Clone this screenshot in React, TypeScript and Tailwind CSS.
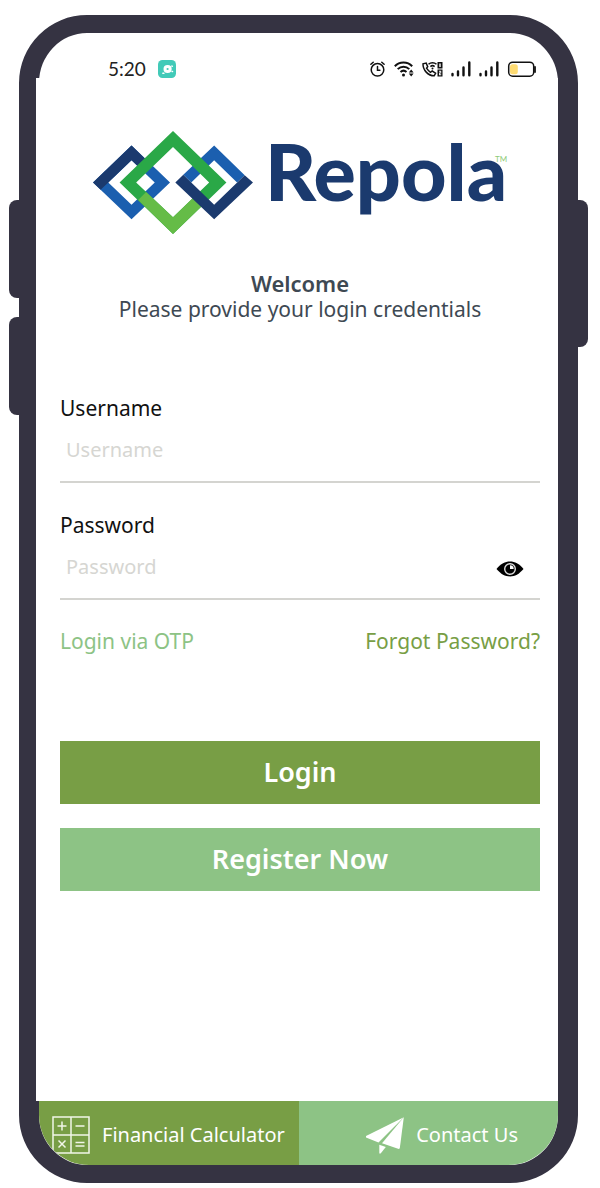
import { useState } from "react";

function LogoMark() {
  return (
    <svg viewBox="44 32 482 310" className="w-[160px] shrink-0" aria-hidden="true">
      {/* left diamond */}
      <path fill="#1b5faf" fillRule="evenodd" d="M44 187 160 76 276 187 160 298ZM90 187 160 254 230 187 160 120Z" />
      <path fill="#1b3a6e" d="M44 187 160 76 206 120 183 142 160 120 90 187 67 209Z" />
      {/* right diamond, upper half */}
      <path fill="#1b5faf" d="M316 164 409 76 501 165 478 187 409 120 340 187Z" />
      {/* center diamond */}
      <path fill="#2aa847" fillRule="evenodd" d="M124 187 285 32 446 187 285 342ZM174 187 285 292 394 187 285 80Z" />
      <path fill="#65bc47" d="M180 240 204 216 285 292 345 234 372 258 285 342Z" />
      {/* right diamond, lower half */}
      <path fill="#1b3a6e" d="M292 187 316 164 409 254 501 165 526 187 409 298Z" />
    </svg>
  );
}

function AlarmIcon() {
  return (
    <svg viewBox="0 0 16 18" className="h-[18px] w-4" fill="none" stroke="#111" strokeWidth="1.5" strokeLinecap="round">
      <circle cx="7.500" cy="9.800" r="6.300" />
      <path d="M7.500 6.500v3.700h2.400M.9 4.200 3.200 2.200M14.100 4.200 11.800 2.200" />
    </svg>
  );
}

function WifiIcon() {
  return (
    <svg viewBox="0 0 20 18" className="h-[18px] w-5" fill="none" stroke="#111" strokeWidth="2">
      <path d="M.8 6.200C5.500 1.200 13.500 1.200 18.200 6.200M3.700 9.100C7 5.800 12 5.800 15.300 9.100M6.500 12C8.500 10.200 10.500 10.200 12.500 12" />
      <circle cx="9.500" cy="15" r="1.500" fill="#111" stroke="none" />
      <path fill="#111" stroke="none" d="M14.800 12.400 17.200 9.600 19.600 12.400ZM14.800 13.600 17.200 16.400 19.600 13.600Z" />
    </svg>
  );
}

function CallIcon() {
  return (
    <svg viewBox="0 0 21 18" className="h-[18px] w-[21px]" fill="none" stroke="#111" strokeWidth="1.500">
      <path d="M1 3.800C.8 10 6 15.800 12.200 15.800L13.600 13.200 10.200 11 8.500 12.300C6.800 11.300 5.500 9.700 4.500 8.200L5.700 6.700 4.200 3.100 1 3.800Z" />
      <path d="M6.500 4.300C8.700 2.200 12.300 2.200 14.500 4.300M8.400 6.600C9.700 5.400 11.300 5.400 12.600 6.600" />
      <circle cx="10.500" cy="8.600" r="1" fill="#111" stroke="none" />
      <path fill="#111" stroke="none" fillRule="evenodd" d="M15.500 2h5v6.500h-5ZM17.300 3.500v3.500h1.400V3.500ZM15.500 9.500h5v7h-5ZM17 10.800v1h1.500v.8H17v2.600h2.200v-1h-1.400v-.8h1.400v-2.600Z" />
    </svg>
  );
}

function SignalIcon() {
  return (
    <svg viewBox="0 0 20 18" className="h-[18px] w-5" stroke="#111" strokeWidth="2.400" strokeLinecap="round">
      <path d="M1.500 14V15.200M7 11.500V15.200M12.500 7.500V15.200M18.300 2.500V15.200" />
    </svg>
  );
}

function BatteryIcon() {
  return (
    <svg viewBox="0 0 30 18" className="h-[18px] w-[30px]">
      <rect x="1.700" y="2.200" width="25" height="14" rx="4" fill="none" stroke="#111" strokeWidth="1.500" />
      <rect x="3" y="4.200" width="7.800" height="10" rx="2.500" fill="#ffdc73" />
      <path d="M28 7v5" stroke="#111" strokeWidth="1.800" strokeLinecap="round" />
    </svg>
  );
}

function EyeIcon() {
  return (
    <svg viewBox="0 0 28 16" className="h-4 w-7">
      <path d="M.5 8C5 2.800 9 .6 14 .6S23 2.800 27.500 8C23 13.200 19 15.400 14 15.400S5 13.200.5 8Z" />
      <circle cx="14" cy="8" r="5.300" fill="none" stroke="#ddd" strokeWidth="1.400" />
      <path fill="#fff" d="M14 8V4.300A3.700 3.700 0 0 1 17.700 8Z" />
    </svg>
  );
}

function CalculatorIcon() {
  return (
    <svg viewBox="0 0 38 38" className="size-[38px] shrink-0" fill="none" stroke="#f1f6e8" strokeWidth="1.500">
      <path d="M1 1h36v36H1ZM19 1v36M1 19h36M5.500 10h9M10 5.500v9M23.500 10h9M6.500 24.500l7 7M13.500 24.500l-7 7M23.500 26.500h9M23.500 30h9" />
    </svg>
  );
}

function PlaneIcon() {
  return (
    <svg viewBox="0 0 38 37" className="h-[37px] w-[38px] shrink-0" fill="#fff">
      <path d="M37.800.3 0 19V20.400L12.500 25.500Z" />
      <path d="M37.800.3 16 26.300 32.800 32 33.800 31.300Z" />
      <path d="M13.300 27.800 19.800 30 14.600 36.500H13.300Z" />
    </svg>
  );
}

export default function App() {
  const [username, setUsername] = useState("");
  const [password, setPassword] = useState("");
  const [showPassword, setShowPassword] = useState(false);

  return (
    <div className="flex min-h-screen flex-col bg-white pt-[15px] pr-[22px] pb-[5px] pl-[19px] font-['Noto_Sans',sans-serif]">
      {/* Phone frame */}
      <div className="relative flex flex-1 flex-col rounded-[68px] border-x-[20px] border-y-[18px] border-[#353342]">
        {/* Hardware buttons */}
        <div className="absolute top-[167px] -left-[30px] h-[98px] w-[12px] rounded-l-lg bg-[#353342]" />
        <div className="absolute top-[284px] -left-[30px] h-[98px] w-[12px] rounded-l-lg bg-[#353342]" />
        <div className="absolute top-[167px] -right-[30px] h-[147px] w-[12px] rounded-r-lg bg-[#353342]" />

        <header className="flex h-[45px] items-end pr-[21px] pl-[69px]">
          <span className="font-[Lato,sans-serif] text-[19px] leading-[18px] text-[#222]">5:20</span>
          <svg viewBox="0 0 18 18" className="ml-3 size-[18px]">
            <rect width="18" height="18" rx="4.500" fill="#42cab8" />
            <circle cx="9.600" cy="9" r="2.600" fill="none" stroke="#fff" strokeWidth="3" />
            <path d="M4.800 13.200h1.200M13.800 6l.6.300M14 11.500h.6" stroke="#fff" strokeWidth="1.400" strokeLinecap="round" />
          </svg>
          <div className="ml-auto flex items-center gap-2">
            <AlarmIcon />
            <WifiIcon />
            <CallIcon />
            <SignalIcon />
            <SignalIcon />
            <BatteryIcon />
          </div>
        </header>

        <main className="-ml-[3px] flex-1 bg-white pr-[18px] pl-6">
          <div className="flex items-start justify-center gap-3 pt-[53px]">
            <LogoMark />
            <h1 className="relative font-[Lato,sans-serif] text-[79px] leading-[80px] font-black text-[#1b3a6e]">
              Repola
              <span className="absolute top-6 right-0 text-[8px] leading-none font-normal text-[#8fcb78]">TM</span>
            </h1>
          </div>

          <div className="mt-9 text-center text-[#3e4953]">
            <h2 className="text-[22px] leading-[26px] font-semibold">Welcome</h2>
            <p className="text-[21px] leading-[26px]">Please provide your login credentials</p>
          </div>

          <form className="mt-[71px]" onSubmit={(e) => e.preventDefault()}>
            <div className="border-b-2 border-[#d4d4d0]">
              <label htmlFor="username" className="block text-[21px] leading-[30px] text-[#111]">
                Username
              </label>
              <input
                id="username"
                type="text"
                placeholder="Username"
                value={username}
                onChange={(e) => setUsername(e.target.value)}
                className="block h-[58px] w-full px-1.5 pb-[5px] text-[20px] outline-none placeholder:text-[#d6d6d2]"
              />
            </div>

            <div className="mt-[27px] border-b-2 border-[#d4d4d0]">
              <label htmlFor="password" className="block text-[21px] leading-[30px] text-[#111]">
                Password
              </label>
              <div className="flex h-[58px] items-center pr-4">
                <input
                  id="password"
                  type={showPassword ? "text" : "password"}
                  placeholder="Password"
                  value={password}
                  onChange={(e) => setPassword(e.target.value)}
                  className="h-full min-w-0 flex-1 px-1.5 pb-[5px] text-[20px] outline-none placeholder:text-[#d6d6d2]"
                />
                <button type="button" aria-label="Show password" onClick={() => setShowPassword(!showPassword)}>
                  <EyeIcon />
                </button>
              </div>
            </div>

            <div className="mt-[26px] flex justify-between text-[21px] leading-[30px]">
              <a href="#otp" className="text-[#8dc385]">Login via OTP</a>
              <a href="#forgot" className="text-[#789e45]">Forgot Password?</a>
            </div>

            <div className="mt-[85px] flex flex-col gap-6">
              <button type="submit" className="h-[63px] bg-[#789e45] text-[27px] font-semibold text-white">
                Login
              </button>
              <button type="button" className="h-[63px] bg-[#8dc385] text-[27px] font-semibold text-white">
                Register Now
              </button>
            </div>
          </form>
        </main>

        <footer className="grid h-16 grid-cols-2 overflow-hidden rounded-b-[50px] text-[20px] text-white">
          <a href="#calculator" className="flex items-center gap-3 bg-[#789e45] pt-1 pl-[13px] whitespace-nowrap">
            <CalculatorIcon />
            Financial Calculator
          </a>
          <a href="#contact" className="flex items-center justify-end gap-3 bg-[#8dc385] pt-1 pr-10 whitespace-nowrap">
            <PlaneIcon />
            Contact Us
          </a>
        </footer>
      </div>
    </div>
  );
}
